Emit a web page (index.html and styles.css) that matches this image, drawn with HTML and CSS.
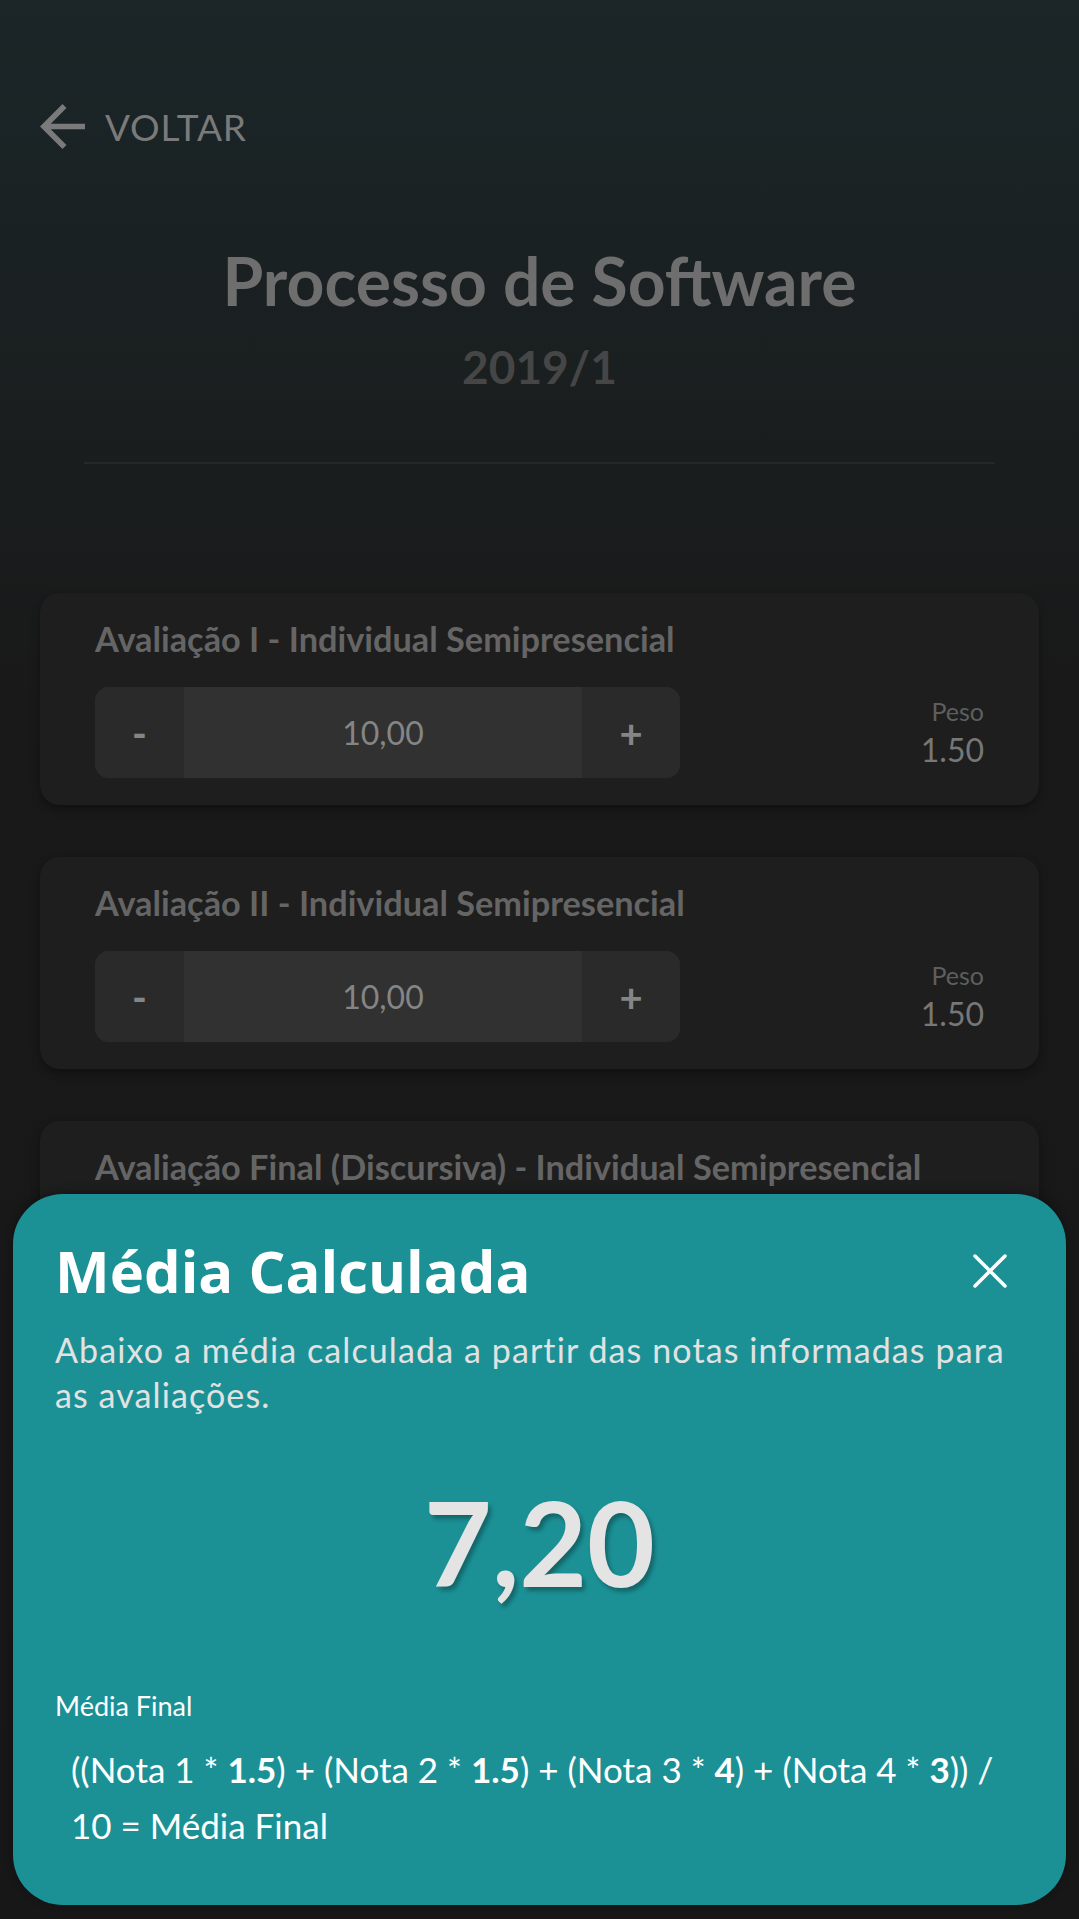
FILE: index.html
```html
<!DOCTYPE html>
<html>
    <head>
        <title>Processo de Software</title>
        <meta charset="utf-8">
        <link rel="stylesheet" href="styles.css">
    </head>
    <body>
        <div class="screen">
            <div class="topbar">
                <a class="back" href="#">
                    <svg class="back_icon" viewBox="4 4 16 16"><path d="M20 11H7.83l5.59-5.59L12 4l-8 8 8 8 1.41-1.41L7.83 13H20v-2z"/></svg>
                    <span>VOLTAR</span>
                </a>
            </div>

            <div class="subject">
                <h1>Processo de Software</h1>
                <h2>2019/1</h2>
            </div>
            <div class="divider"></div>

            <div class="cards">
                <div class="card">
                    <div class="card_title">Avaliação I - Individual Semipresencial</div>
                    <div class="card_row">
                        <div class="stepper">
                            <button class="step minus">-</button>
                            <div class="step_value">10,00</div>
                            <button class="step plus">+</button>
                        </div>
                        <div class="weight">
                            <span class="weight_label">Peso</span>
                            <span class="weight_value">1.50</span>
                        </div>
                    </div>
                </div>
                <div class="card">
                    <div class="card_title">Avaliação II - Individual Semipresencial</div>
                    <div class="card_row">
                        <div class="stepper">
                            <button class="step minus">-</button>
                            <div class="step_value">10,00</div>
                            <button class="step plus">+</button>
                        </div>
                        <div class="weight">
                            <span class="weight_label">Peso</span>
                            <span class="weight_value">1.50</span>
                        </div>
                    </div>
                </div>
                <div class="card">
                    <div class="card_title">Avaliação Final (Discursiva) - Individual Semipresencial</div>
                    <div class="card_row">
                        <div class="stepper">
                            <button class="step minus">-</button>
                            <div class="step_value">6,00</div>
                            <button class="step plus">+</button>
                        </div>
                        <div class="weight">
                            <span class="weight_label">Peso</span>
                            <span class="weight_value">4.00</span>
                        </div>
                    </div>
                </div>
            </div>

            <!-- bottom sheet com o resultado -->
            <div class="sheet">
                <div class="sheet_head">
                    <div class="sheet_title">Média Calculada</div>
                    <svg class="close" viewBox="0 0 34 34"><path d="M2 2L32 32M32 2L2 32"/></svg>
                </div>
                <p class="sheet_text">Abaixo a média calculada a partir das notas informadas para as avaliações.</p>
                <div class="result">7,20</div>
                <div class="formula_label">Média Final</div>
                <div class="formula">((Nota 1 * <b>1.5</b>) + (Nota 2 * <b>1.5</b>) + (Nota 3 * <b>4</b>) + (Nota 4 * <b>3</b>)) / 10 = Média Final</div>
            </div>
        </div>
    </body>
</html>
```

FILE: styles.css
```css
body{
    margin: 0;
    font-family: Lato, "Open Sans", sans-serif;
    background-color: #161616;
}

.screen{
    position: relative;
    width: 1079px;
    height: 1919px;
    overflow: hidden;
    background: linear-gradient(to bottom, #1b2628 0px, #1a1e1f 420px, #191919 700px, #171717 1919px);
}

/* topo */
.topbar{
    padding: 104px 0 0 40px;
}
.back{
    display: flex;
    align-items: center;
    gap: 20px;
    height: 45px;
    color: #7a7a7a;
    text-decoration: none;
    font-size: 37px;
    letter-spacing: 0.8px;
}
.back_icon{
    width: 45px;
    height: 45px;
    fill: #7a7a7a;
}

.subject{
    margin-top: 92px;
    text-align: center;
}
.subject h1{
    margin: 0;
    font-size: 66px;
    line-height: 1.2;
    font-weight: bold;
    color: #6e6e6e;
}
.subject h2{
    margin: 19px 0 0 0;
    font-size: 46px;
    line-height: 1.2;
    font-weight: bold;
    color: #464646;
}
.divider{
    margin: 68px 84px 0 84px;
    height: 2px;
    background-color: #262727;
}

/* cartoes das avaliacoes */
.cards{
    margin: 129px 40px 0 40px;
    display: flex;
    flex-direction: column;
    gap: 52px;
}
.card{
    padding: 27px 55px;
    background-color: #1e1e1e;
    border-radius: 20px;
    box-shadow: 0 4px 8px rgba(0, 0, 0, 0.35);
}
.card_title{
    font-size: 34.3px;
    line-height: 38px;
    font-weight: bold;
    color: #656565;
}
.card_row{
    margin-top: 29px;
    display: flex;
    align-items: center;
    justify-content: space-between;
}
.stepper{
    display: flex;
    width: 585px;
    height: 91px;
    border-radius: 14px;
    overflow: hidden;
    background-color: #2a2a2a;
}
.step{
    border: none;
    background-color: #2a2a2a;
    color: #858585;
    font-family: Lato, sans-serif;
    font-weight: bold;
    font-size: 40px;
    padding: 0;
}
.minus{ width: 89px; }
.plus{ width: 98px; }
.step_value{
    flex: 1;
    display: flex;
    align-items: center;
    justify-content: center;
    background-color: #313131;
    color: #858585;
    font-size: 32px;
}
.weight{
    display: flex;
    flex-direction: column;
    align-items: flex-end;
}
.weight_label{
    font-size: 25px;
    line-height: 30px;
    color: #5e5e5e;
}
.weight_value{
    margin-top: 5px;
    font-size: 32px;
    line-height: 1.2;
    color: #777;
}

/* bottom sheet */
.sheet{
    position: absolute;
    left: 13px;
    right: 13px;
    top: 1194px;
    bottom: 14px;
    box-sizing: border-box;
    padding: 42px 42px 0 42px;
    background-color: #1b9196;
    border-radius: 50px;
    box-shadow: 0 -2px 10px rgba(0, 0, 0, 0.3);
}
.sheet_head{
    display: flex;
    justify-content: space-between;
    align-items: center;
}
.sheet_title{
    font-family: "Open Sans", sans-serif;
    font-weight: bold;
    font-size: 58px;
    line-height: 1.2;
    color: #fff;
}
.close{
    width: 34px;
    height: 34px;
    margin-right: 17px;
    stroke: #fff;
    stroke-width: 3.5;
    stroke-linecap: round;
    fill: none;
}
.sheet_text{
    margin: 21px 0 0 0;
    font-size: 34px;
    letter-spacing: 1.1px;
    line-height: 45px;
    color: #e2e2e2;
}
.result{
    margin-top: 53px;
    text-align: center;
    font-size: 117px;
    font-weight: bold;
    line-height: 144px;
    color: #e4e4e4;
    text-shadow: 3px 4px 4px rgba(0, 0, 0, 0.3);
}
.formula_label{
    margin-top: 76px;
    font-size: 27px;
    line-height: 31px;
    color: #fff;
}
.formula{
    margin-top: 20px;
    padding-left: 16px;
    font-size: 35px;
    line-height: 56px;
    color: #fff;
}
```
